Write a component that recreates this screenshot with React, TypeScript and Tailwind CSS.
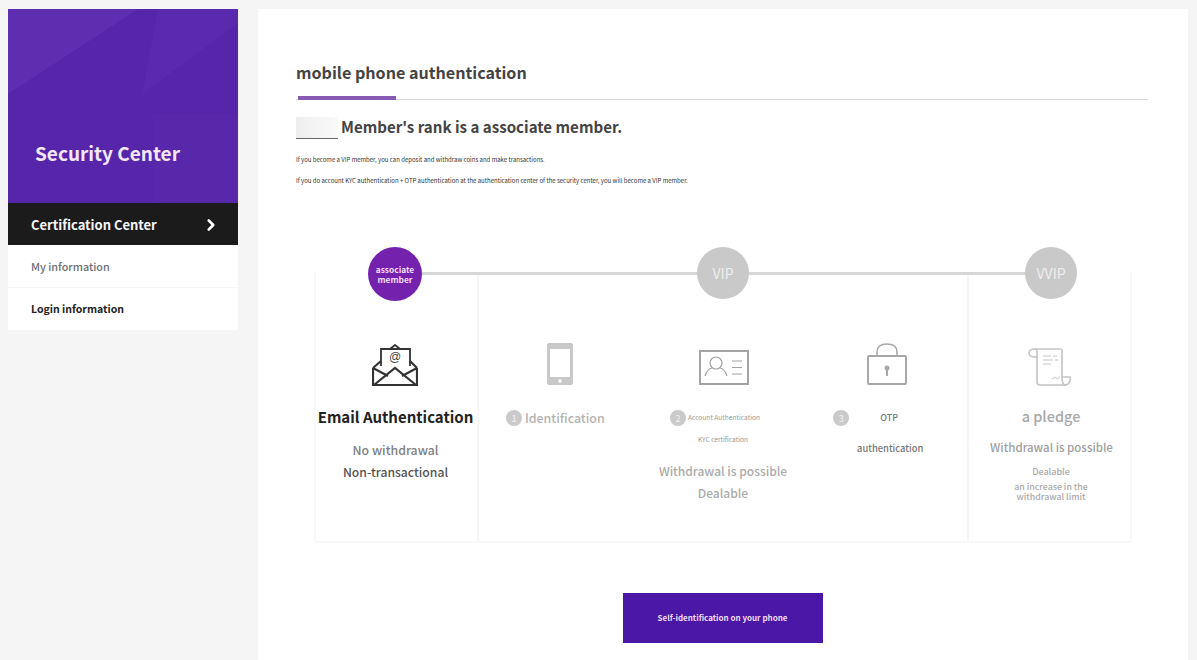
import React from "react";
import { ChevronRight } from "lucide-react";

const font = "font-['Noto_Sans_CJK_KR','Noto_Sans',sans-serif]";

const EnvelopeIcon = () => (
  <svg width="46" height="42" viewBox="0 0 46 42" fill="none" stroke="#333" strokeWidth="2.200">
    <path d="M1 24V41H45V24" />
    <path d="M2 41L23 24L44 41" />
    <path d="M1 24L9 17M45 24L38 17" />
    <path d="M1 24L16 32M45 24L30 32" />
    <path d="M9 22V5H38V22" strokeWidth="1.800" />
    <path d="M18 5L23 1L28 5" strokeWidth="1.800" />
    <text x="23" y="17" textAnchor="middle" fontSize="12" fill="#444" stroke="none" fontFamily="Liberation Sans, sans-serif">@</text>
  </svg>
);

const PhoneIcon = () => (
  <svg width="26" height="42" viewBox="0 0 26 42">
    <rect x="0" y="0" width="26" height="42" rx="2" fill="#c8c8c8" />
    <rect x="3" y="6" width="20" height="28" fill="#fff" />
    <circle cx="13" cy="38" r="1.800" fill="#fff" />
  </svg>
);

const CardIcon = () => (
  <svg width="50" height="35" viewBox="0 0 50 35" fill="none" stroke="#a3a3a3" strokeWidth="1.200">
    <rect x="1" y="1" width="48" height="33" strokeWidth="2" />
    <circle cx="17" cy="13" r="6" />
    <path d="M6 26q2-7 7-8M28 26q-2-7-7-8" />
    <path d="M33 11h10M33 17.500h10M33 24h10" />
  </svg>
);

const LockIcon = () => (
  <svg width="40" height="42" viewBox="0 0 40 42" fill="none" stroke="#a8a8a8" strokeWidth="2">
    <rect x="1" y="13" width="38" height="28" rx="1" />
    <path d="M10 13V9q0-8 10-8t10 8v4" strokeWidth="1.500" />
    <circle cx="20" cy="25" r="2.500" fill="#a8a8a8" stroke="none" />
    <path d="M20 26v7" />
  </svg>
);

const ScrollIcon = () => (
  <svg width="44" height="38" viewBox="0 0 44 38" fill="none" stroke="#c4c4c4" strokeWidth="1.600">
    <path d="M7 1h25q2 0 2 2v26" />
    <path d="M7 1q-6 0-6 4t6 4h2V3q0-2-2-2" />
    <path d="M9 9v25q0 3 3 3h26" />
    <path d="M34 29h8q1 4-2 7-1 1-3 1-3-1-3-8" />
    <path d="M15 8h8M25 8h4M15 12h10M27 12h3M15 16h8" strokeWidth="1" />
    <path d="M24 31q3-3 4-1t4-1" strokeWidth="1" />
  </svg>
);

const Badge = ({ n }: { n: number }) => (
  <span className="flex h-4 w-4 shrink-0 items-center justify-center rounded-full bg-[#cacaca] text-[9px] leading-none text-[#eee]">
    {n}
  </span>
);

const Circle = ({ label, className }: { label: string; className: string }) => (
  <div className={`absolute top-[-26px] flex h-[52px] w-[52px] items-center justify-center rounded-full bg-[#c9c9c9] text-[14px] text-[#eee] ${className}`}>
    {label}
  </div>
);

const App = () => {
  return (
    <div className={`flex h-[660px] gap-5 overflow-hidden bg-[#f5f5f5] pl-2 pt-[9px] ${font}`}>
      {/* Sidebar */}
      <aside className="h-[321px] w-[230px] bg-white">
        <div className="relative flex h-[194px] items-end overflow-hidden bg-[#5526a9] pb-[36px] pl-[27px]">
          <svg className="absolute inset-0" width="230" height="194" viewBox="0 0 230 194">
            <polygon points="0,0 130,0 0,85" fill="#5e2eb1" />
            <polygon points="150,0 230,0 230,14 134,85" fill="#5a2aae" />
            <polygon points="145,105 230,105 230,194 145,194" fill="#5828ab" />
          </svg>
          <h1 className="relative text-[19px] font-bold leading-[28px] text-[#f6e6fb]">Security Center</h1>
        </div>
        <div className="flex h-[42px] items-center justify-between bg-[#1b1b1b] pl-[23px] pr-[18px] pt-[1px] text-[13px] font-bold text-[#f5f5f5]">
          Certification Center
          <ChevronRight size={18} strokeWidth={3.5} className="text-white" />
        </div>
        <div className="flex h-[43px] items-center border-b border-[#f6f6f6] pl-[23px] text-[10.800px] font-medium text-[#6f6f74]">
          My information
        </div>
        <div className="flex h-[42px] items-center pl-[23px] text-[10.500px] font-bold text-[#222]">
          Login information
        </div>
      </aside>

      {/* Main panel */}
      <main className="w-[930px] bg-white pl-[38px] pr-[40px] pt-[50px]">
        <h2 className="text-[16.100px] font-bold leading-[26px] text-[#444]">mobile phone authentication</h2>
        <div className="mt-[11px] h-[4px] border-b-[1.500px] border-[#d8d6dc]">
          <div className="ml-[2px] h-[4px] w-[98px] bg-[#8a5bb5]" />
        </div>

        <div className="mt-[15px] flex items-end gap-[3px]">
          <span className="mb-[-2px] h-[22px] w-[42px] border-b border-[#666] bg-gradient-to-r from-[#eeeeee] to-[#fafafa]" />
          <p className="text-[15.100px] font-bold leading-[22px] text-[#444]">Member's rank is a associate member.</p>
        </div>
        <p className="mt-[18px] text-[6px] leading-[10px] text-[#333]">
          If you become a VIP member, you can deposit and withdraw coins and make transactions.
        </p>
        <p className="mt-[11px] text-[6px] leading-[10px] text-[#333]">
          If you do account KYC authentication + OTP authentication at the authentication center of the security center, you will become a VIP member.
        </p>

        {/* Rank steps */}
        <div className="relative ml-[18px] mt-[87px] grid w-[818px] grid-cols-[163px_492px_163px] border-b-2 border-[#f9f9f9]">
          <div className="absolute left-[81px] right-[81px] top-[-1px] h-[3px] bg-[#d6d6d6]" />
          <div className="absolute left-[54px] top-[-26px] flex h-[54px] w-[54px] items-center justify-center rounded-full bg-[#7421ae] text-center text-[8.400px] font-bold leading-[10px] text-[#f3dcf7]">
            associate
            <br />
            member
          </div>
          <Circle label="VIP" className="left-[383px]" />
          <Circle label="VVIP" className="left-[711px]" />

          <section className="flex h-[268px] flex-col items-center border-l-2 border-[#f8f8f8] pt-[71px]">
            <div className="mr-[4px]">
              <EnvelopeIcon />
            </div>
            <h3 className="mr-[2px] mt-[19px] text-[15px] font-bold leading-[24px] text-[#222]">Email Authentication</h3>
            <p className="mr-[2px] mt-[10px] text-[12.300px] font-medium leading-[22px] text-[#808080]">No withdrawal</p>
            <p className="mr-[2px] text-[12.200px] font-medium leading-[22px] text-[#555]">Non-transactional</p>
          </section>

          <section className="grid grid-cols-3 border-l-2 border-r-2 border-[#f6f6f6] pt-[70px]">
            <div className="flex flex-col items-center">
              <PhoneIcon />
              <div className="mr-[10px] mt-[23px] flex items-center gap-[3px] text-[12.400px] font-medium leading-[20px] text-[#b3b3b3]">
                <Badge n={1} />
                Identification
              </div>
            </div>

            <div className="flex flex-col items-center">
              <div className="ml-[2px] mt-[7px]">
                <CardIcon />
              </div>
              <div className="mr-[16px] mt-[23px] flex h-[20px] items-center gap-[2px] text-[6.600px] text-[#999]">
                <Badge n={2} />
                Account Authentication
              </div>
              <p className="mt-[6px] text-[6.600px] leading-[10px] text-[#999]">KYC certification</p>
              <p className="mt-[16px] text-[12px] font-medium leading-[22px] text-[#ababab]">Withdrawal is possible</p>
              <p className="text-[12px] font-medium leading-[22px] text-[#ababab]">Dealable</p>
            </div>

            <div className="flex flex-col items-center">
              <div className="ml-[2px]">
                <LockIcon />
              </div>
              <div className="mt-[23px] flex h-[20px] items-center gap-[31px] self-start pl-[29px] text-[9px] font-medium text-[#777]">
                <Badge n={3} />
                OTP
              </div>
              <p className="ml-[9px] mt-[10px] text-[9.400px] font-medium leading-[20px] text-[#777]">authentication</p>
            </div>
          </section>

          <section className="flex flex-col items-center border-r-2 border-[#f8f8f8] pt-[75px]">
            <ScrollIcon />
            <h3 className="ml-[3px] mt-[18px] text-[14.500px] font-medium leading-[24px] text-[#a8a8a8]">a pledge</h3>
            <p className="ml-[4px] mt-[8px] text-[11.500px] font-medium leading-[22px] text-[#a0a0a0]">Withdrawal is possible</p>
            <p className="ml-[3px] mt-[6px] text-[9px] font-medium leading-[16px] text-[#aaa]">Dealable</p>
            <p className="ml-[3px] mt-[2px] text-center text-[8.800px] font-medium leading-[10px] text-[#aaa]">
              an increase in the
              <br />
              withdrawal limit
            </p>
          </section>
        </div>

        <div className="ml-[1px] mt-[50px] flex justify-center">
          <button className="h-[50px] w-[200px] bg-[#4b17a6] text-[8px] font-bold text-[#f0dcf8]">
            Self-identification on your phone
          </button>
        </div>
      </main>
    </div>
  );
};

export default App;
